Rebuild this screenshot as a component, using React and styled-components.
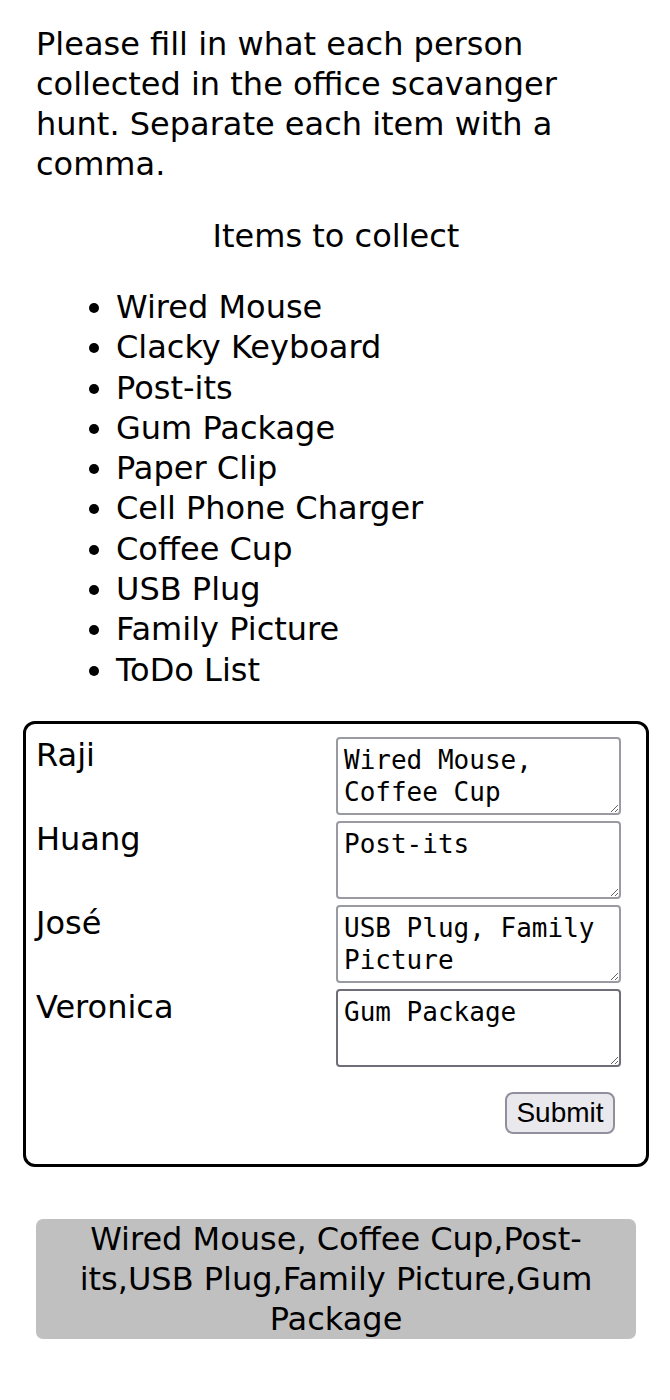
import React, { useState } from 'react';
import styled, { createGlobalStyle } from 'styled-components';

const GlobalStyle = createGlobalStyle`
  body {
    margin: 0;
    background: #fff;
    color: #000;
    font-family: "DejaVu Sans", Verdana, sans-serif;
  }
`;

const Page = styled.div`
  width: 600px;
  margin-left: 36px;
  padding: 24px 0 40px;
  font-size: 32px;
  line-height: 40px;
`;

const Intro = styled.p`
  margin: 0 0 32px;
`;

const ListTitle = styled.h2`
  margin: 0 0 31px;
  font-size: 32px;
  font-weight: normal;
  line-height: 40px;
  text-align: center;
`;

const ItemList = styled.ul`
  margin: 0 0 31px;
  padding-left: 80px;

  li {
    line-height: 40.3px;
  }
`;

const HuntForm = styled.form`
  margin: 0 -13px;
  border: 3px solid #000;
  border-radius: 12px;
  padding: 13px 10px 30px;
  display: flex;
  flex-direction: column;
  gap: 6px;
`;

const PersonRow = styled.div`
  display: grid;
  grid-template-columns: 300px 300px;
`;

const PersonName = styled.label`
  margin-top: -2px;
`;

const ItemsBox = styled.textarea`
  box-sizing: border-box;
  width: 285px;
  height: 78px;
  margin: 0;
  padding: 5px 6px;
  border: 2px solid ${p => (p.$hover ? '#6e6e78' : '#9a9aa3')};
  border-radius: 4px;
  font-family: "DejaVu Sans Mono", monospace;
  font-size: 26px;
  line-height: 32px;
  color: #000;
  background: #fff;
`;

const Actions = styled.div`
  display: flex;
  justify-content: flex-end;
  padding-top: 19px;
  padding-right: 21px;
`;

const SubmitButton = styled.button`
  box-sizing: border-box;
  width: 110px;
  height: 42px;
  padding: 0;
  border: 2px solid #8f8f9d;
  border-radius: 8px;
  background: #e9e9ed;
  color: #000;
  font-family: "Liberation Sans", Arial, sans-serif;
  font-size: 28px;
`;

const Result = styled.div`
  margin-top: 52px;
  min-height: 119px;
  border-radius: 7px;
  background: #c0c0c0;
  text-align: center;
  line-height: 40px;
`;

const items = [
  'Wired Mouse',
  'Clacky Keyboard',
  'Post-its',
  'Gum Package',
  'Paper Clip',
  'Cell Phone Charger',
  'Coffee Cup',
  'USB Plug',
  'Family Picture',
  'ToDo List'
];

const people = [
  { name: 'Raji', found: 'Wired Mouse, Coffee Cup' },
  { name: 'Huang', found: 'Post-its' },
  { name: 'José', found: 'USB Plug, Family Picture' },
  { name: 'Veronica', found: 'Gum Package' }
];

export default function App() {
  const [values, setValues] = useState(people.map(p => p.found));
  const [result, setResult] = useState('Wired Mouse, Coffee Cup,Post-its,USB Plug,Family Picture,Gum Package');

  const handleSubmit = e => {
    e.preventDefault();
    setResult(values.join(','));
  };

  return (
    <Page>
      <GlobalStyle />
      <Intro>
        Please fill in what each person collected in the office scavanger hunt. Separate each item with a comma.
      </Intro>
      <ListTitle>Items to collect</ListTitle>
      <ItemList>
        {items.map(item => (
          <li key={item}>{item}</li>
        ))}
      </ItemList>
      <HuntForm onSubmit={handleSubmit}>
        {people.map((person, i) => (
          <PersonRow key={person.name}>
            <PersonName htmlFor={`person-${i}`}>{person.name}</PersonName>
            <ItemsBox
              id={`person-${i}`}
              rows={2}
              $hover={i === people.length - 1}
              value={values[i]}
              onChange={e => {
                const next = [...values];
                next[i] = e.target.value;
                setValues(next);
              }}
            />
          </PersonRow>
        ))}
        <Actions>
          <SubmitButton type="submit">Submit</SubmitButton>
        </Actions>
      </HuntForm>
      <Result>{result}</Result>
    </Page>
  );
}
